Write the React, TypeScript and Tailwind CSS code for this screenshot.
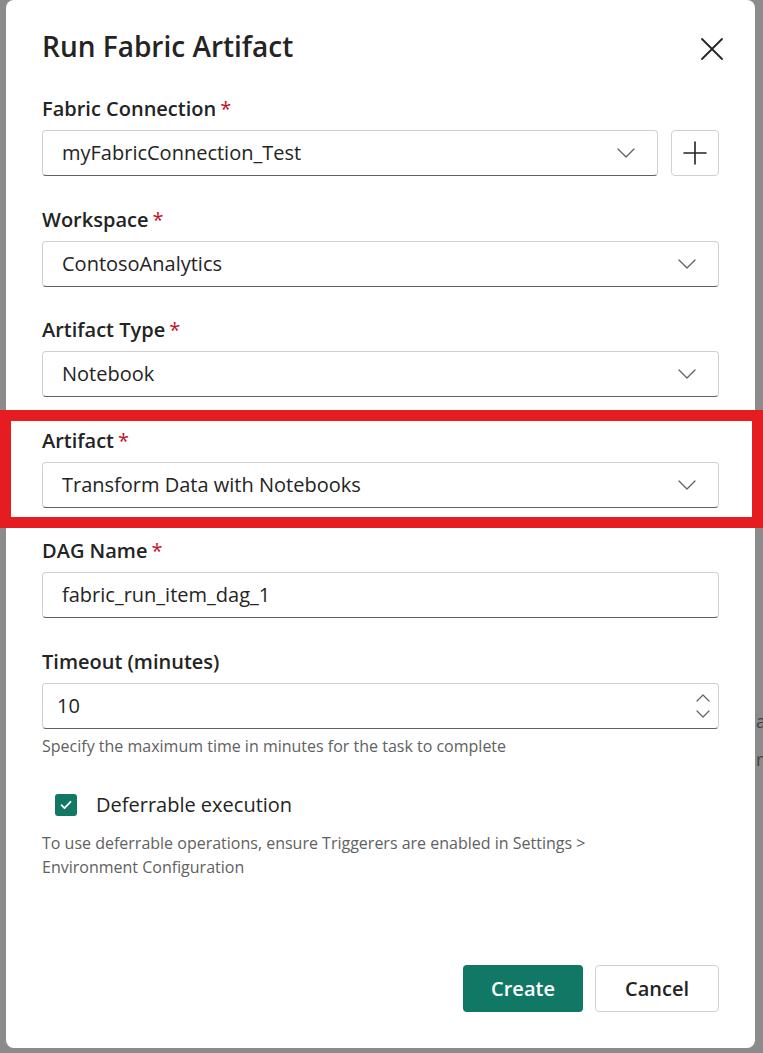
import React from 'react';

const ChevronDown = () => (
  <svg width="18" height="10" viewBox="0 0 18 10" fill="none" className="shrink-0">
    <path d="M1 1l8 8 8-8" stroke="#616161" strokeWidth="1.3" strokeLinecap="round" strokeLinejoin="round" />
  </svg>
);

const Label: React.FC<{ text: string; required?: boolean }> = ({ text, required }) => (
  <div className="text-[20px] leading-[28px] font-semibold text-[#242424]">
    {text}
    {required && <span className="text-[#c50f1f] font-normal ml-1">*</span>}
  </div>
);

const Select: React.FC<{ value: string }> = ({ value }) => (
  <div className="flex-1 h-[46px] flex items-center justify-between pl-[19px] pr-[22px] bg-white border border-[#d1d1d1] border-b-[#616161] rounded-[4px] text-[20px] text-[#242424]">
    <span>{value}</span>
    <ChevronDown />
  </div>
);

const Field: React.FC<{ label: string; required?: boolean; children: React.ReactNode }> = ({ label, required, children }) => (
  <div className="flex flex-col gap-[7px]">
    <Label text={label} required={required} />
    {children}
  </div>
);

export default function App() {
  return (
    <div className="relative w-[763px] h-[1053px] bg-[#8b8b8b] overflow-hidden font-['Open_Sans',sans-serif]">
      {/* background app peeking out on the right */}
      <div className="absolute left-[756px] top-[712px] text-[18px] text-[#444] leading-none">a</div>
      <div className="absolute left-[756px] top-[750px] text-[18px] text-[#444] leading-none">r</div>

      {/* Dialog */}
      <div className="relative ml-[6px] w-[749px] h-[1048px] bg-white rounded-[8px] px-[36px] pt-[28px] pb-[36px] flex flex-col">
        <div className="flex items-center justify-between">
          <h2 className="text-[28px] leading-[36px] font-semibold text-[#242424]">Run Fabric Artifact</h2>
          <svg width="24" height="24" viewBox="0 0 24 24" fill="none" className="mt-[6px] mr-[-5px]">
            <path d="M2 2l20 20M22 2L2 22" stroke="#242424" strokeWidth="1.8" strokeLinecap="round" />
          </svg>
        </div>

        <div className="mt-[31px] flex flex-col gap-[29.6px]">
          <Field label="Fabric Connection" required>
            <div className="flex gap-[13px]">
              <Select value="myFabricConnection_Test" />
              <div className="w-[48px] h-[46px] shrink-0 flex items-center justify-center border border-[#d1d1d1] rounded-[4px]">
                <svg width="24" height="24" viewBox="0 0 24 24" fill="none">
                  <path d="M12 1v22M1 12h22" stroke="#242424" strokeWidth="1.6" strokeLinecap="round" />
                </svg>
              </div>
            </div>
          </Field>

          <Field label="Workspace" required>
            <div className="flex"><Select value="ContosoAnalytics" /></div>
          </Field>

          <Field label="Artifact Type" required>
            <div className="flex"><Select value="Notebook" /></div>
          </Field>

          <Field label="Artifact" required>
            <div className="flex"><Select value="Transform Data with Notebooks" /></div>
          </Field>

          <Field label="DAG Name" required>
            <div className="h-[46px] flex items-center pl-[19px] border border-[#d1d1d1] border-b-[#616161] rounded-[4px] text-[20px] text-[#242424]">
              fabric_run_item_dag_1
            </div>
          </Field>

          <div className="flex flex-col">
            <Field label="Timeout (minutes)">
              <div className="h-[46px] flex items-center justify-between pl-[14px] pr-[8px] border border-[#d1d1d1] border-b-[#616161] rounded-[4px] text-[20px] text-[#242424]">
                <span>10</span>
                <div className="flex flex-col items-center gap-[8px]">
                  <svg width="14" height="8" viewBox="0 0 14 8" fill="none">
                    <path d="M1 7l6-6 6 6" stroke="#616161" strokeWidth="1.2" strokeLinecap="round" strokeLinejoin="round" />
                  </svg>
                  <svg width="14" height="8" viewBox="0 0 14 8" fill="none">
                    <path d="M1 1l6 6 6-6" stroke="#616161" strokeWidth="1.2" strokeLinecap="round" strokeLinejoin="round" />
                  </svg>
                </div>
              </div>
            </Field>
            <div className="mt-[6px] text-[16px] leading-[22px] text-[#616161]">
              Specify the maximum time in minutes for the task to complete
            </div>
          </div>
        </div>

        <div className="mt-[34px] flex items-center gap-[19px] pl-[13px]">
          <div className="w-[22px] h-[22px] rounded-[3px] bg-[#117865] flex items-center justify-center">
            <svg width="12" height="10" viewBox="0 0 12 10" fill="none">
              <path d="M1.5 5.2l3 3L10.5 1.8" stroke="#fff" strokeWidth="1.8" strokeLinecap="round" strokeLinejoin="round" />
            </svg>
          </div>
          <span className="text-[20px] leading-[28px] text-[#242424]">Deferrable execution</span>
        </div>

        <div className="mt-[12px] text-[16px] leading-[24px] text-[#616161]">
          To use deferrable operations, ensure Triggerers are enabled in Settings &gt;
          <br />
          Environment Configuration
        </div>

        <div className="mt-auto flex justify-end gap-[12px]">
          <button className="w-[120px] h-[47px] rounded-[4px] bg-[#117865] text-white text-[20px] font-semibold">Create</button>
          <button className="w-[124px] h-[47px] rounded-[4px] bg-white border border-[#d1d1d1] text-[#242424] text-[20px] font-semibold">Cancel</button>
        </div>
      </div>

      {/* highlight annotation */}
      <div className="absolute left-0 top-[410px] w-[763px] h-[118px] border-[11px] border-[#e51d20] pointer-events-none" />
    </div>
  );
}
